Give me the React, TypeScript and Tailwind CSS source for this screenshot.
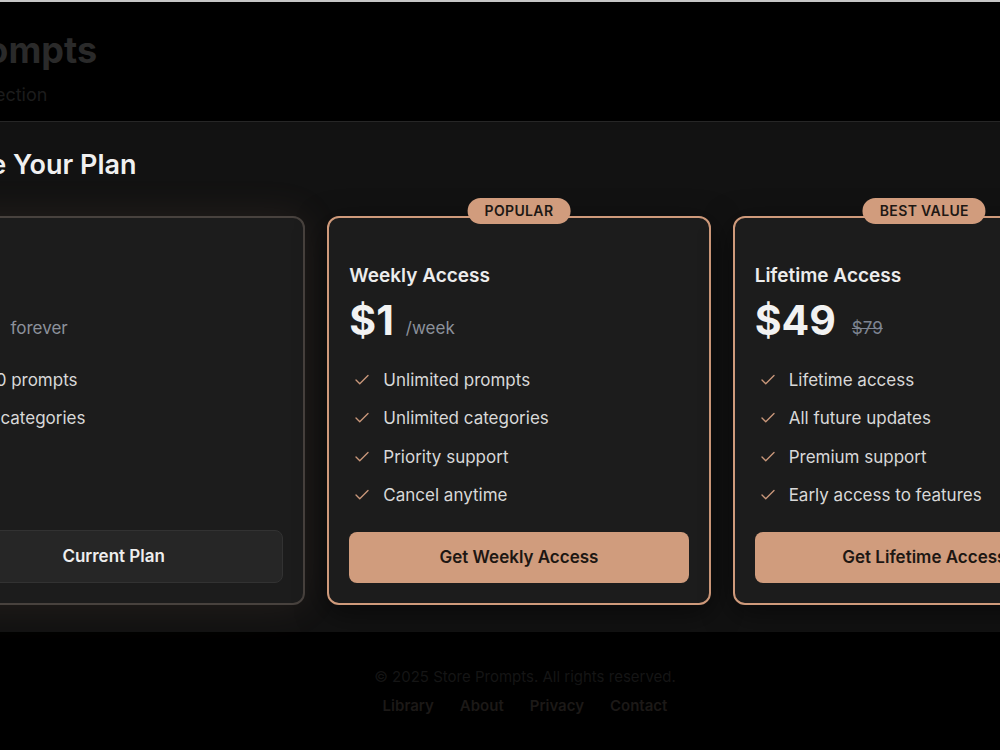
import { Check } from "lucide-react";

type Plan = {
  name: string;
  price: string;
  note: string;
  strike?: boolean;
  features: string[];
  cta: string;
  badge?: string;
  current?: boolean;
};

const plans: Plan[] = [
  {
    name: "Free",
    price: "$0",
    note: "forever",
    features: ["100 prompts", "10 categories"],
    cta: "Current Plan",
    current: true,
  },
  {
    name: "Weekly Access",
    price: "$1",
    note: "/week",
    features: ["Unlimited prompts", "Unlimited categories", "Priority support", "Cancel anytime"],
    cta: "Get Weekly Access",
    badge: "POPULAR",
  },
  {
    name: "Lifetime Access",
    price: "$49",
    note: "$79",
    strike: true,
    features: ["Lifetime access", "All future updates", "Premium support", "Early access to features"],
    cta: "Get Lifetime Access",
    badge: "BEST VALUE",
  },
];

function PlanCard({ plan }: { plan: Plan }) {
  return (
    <div
      className={
        plan.current
          ? "relative flex flex-col rounded-xl border-2 border-[#48423e] bg-[#1c1c1c] px-5 pt-[44px] pb-5 shadow-[0_0_40px_rgba(205,150,115,0.10)]"
          : "relative flex flex-col rounded-xl border-2 border-[#cf9a7b] bg-[#1c1c1c] px-5 pt-[44px] pb-5 shadow-[0_8px_30px_rgba(0,0,0,0.5)]"
      }
    >
      {plan.badge && (
        <span className="absolute left-1/2 -top-[20px] -translate-x-1/2 h-[26px] rounded-full bg-[#d19c7d] px-[17px] text-sm font-semibold leading-[26px] tracking-wide text-[#1e1814] whitespace-nowrap">
          {plan.badge}
        </span>
      )}
      <h3 className="text-[19px] font-semibold leading-7 text-[#ececec]">{plan.name}</h3>
      <div className="mt-[10px] flex items-end">
        <span className="text-[41px] font-bold leading-10 text-[#f2f2f2]">{plan.price}</span>
        <span
          className={
            plan.strike
              ? "ml-4 text-[17px] leading-6 text-[#7d8491] line-through"
              : "ml-3 text-[17px] leading-6 text-[#8c919b]"
          }
        >
          {plan.note}
        </span>
      </div>
      <ul className="mt-[27px] flex flex-col gap-[12.33px]">
        {plan.features.map((f) => (
          <li key={f} className="flex items-center gap-3 text-[17px] leading-[26px] text-[#d8d8d8]">
            <Check className="ml-1 h-[18px] w-[18px] text-[#c9977a]" strokeWidth={1.8} />
            {f}
          </li>
        ))}
      </ul>
      <button
        className={
          plan.current
            ? "mt-auto h-[53px] w-full rounded-lg border border-[#323232] bg-[#262626] text-[17px] font-semibold text-[#eeeeee]"
            : "mt-[24px] h-[51px] w-full rounded-lg bg-[#d09c7d] text-[17px] font-semibold text-[#1d1713]"
        }
      >
        {plan.cta}
      </button>
    </div>
  );
}

export default function App() {
  return (
    <div className="h-[750px] w-[1000px] overflow-hidden border-t-2 border-[#c6c6c6] bg-black font-['Inter',sans-serif]">
      <header className="-ml-[153px] h-[119px] pt-7">
        <h1 className="text-4xl font-bold leading-10 text-[#2a2a2a] whitespace-nowrap">Store Prompts</h1>
        <p className="ml-2 mt-[11px] text-lg leading-7 text-[#1c1c1c] whitespace-nowrap">
          Your prompt collection
        </p>
      </header>

      <section className="-ml-[100px] w-[1300px] border-t border-[#262626] bg-[#121212] pl-[22px] pt-[27px] pb-[27px]">
        <h2 className="-ml-[16px] text-[27px] font-semibold leading-8 text-[#f0f0f0]">Choose Your Plan</h2>
        <div className="mt-[35px] grid w-[1194px] grid-cols-3 gap-[22px]">
          {plans.map((p) => (
            <PlanCard key={p.name} plan={p} />
          ))}
        </div>
      </section>

      <footer className="flex w-[1050px] flex-col items-center pt-[35px]">
        <p className="text-[15px] leading-5 text-[#151515]">© 2025 Store Prompts. All rights reserved.</p>
        <nav className="mt-[9px] flex gap-[26px] text-[15px] font-semibold leading-5 text-[#1c1917]">
          <span>Library</span>
          <span>About</span>
          <span>Privacy</span>
          <span>Contact</span>
        </nav>
      </footer>
    </div>
  );
}
